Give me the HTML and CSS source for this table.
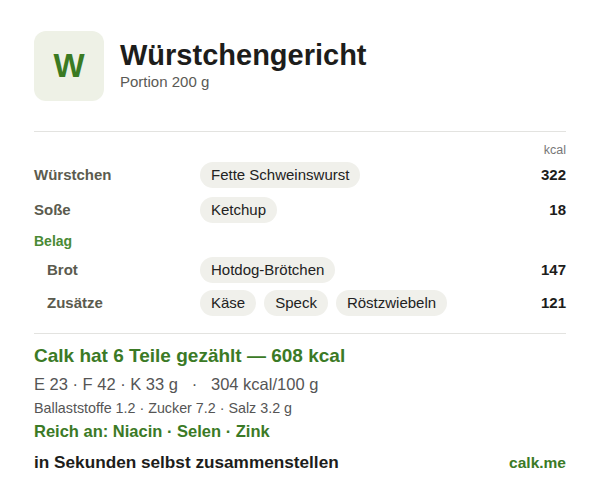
FILE: index.html
```html
<!DOCTYPE html>
<html lang="de">
<head>
<meta charset="utf-8">
<link rel="stylesheet" href="styles.css">
</head>
<body>
<div class="card">
  <header class="head">
    <div class="logo">W</div>
    <div class="head-text">
      <h1 class="title">Würstchengericht</h1>
      <div class="portion">Portion 200 g</div>
    </div>
  </header>
  <hr class="rule">
  <div class="unit">kcal</div>
  <div class="rows">
    <div class="row">
      <div class="label">Würstchen</div>
      <div class="chips"><span class="chip">Fette Schweinswurst</span></div>
      <div class="num">322</div>
    </div>
    <div class="row">
      <div class="label">Soße</div>
      <div class="chips"><span class="chip">Ketchup</span></div>
      <div class="num">18</div>
    </div>
    <div class="group">Belag</div>
    <div class="row sub">
      <div class="label">Brot</div>
      <div class="chips"><span class="chip">Hotdog-Brötchen</span></div>
      <div class="num">147</div>
    </div>
    <div class="row sub">
      <div class="label">Zusätze</div>
      <div class="chips"><span class="chip">Käse</span><span class="chip">Speck</span><span class="chip">Röstzwiebeln</span></div>
      <div class="num">121</div>
    </div>
  </div>
  <hr class="rule rule2">
  <div class="summary">Calk hat 6 Teile gezählt — 608 kcal</div>
  <div class="macros">E 23 · F 42 · K 33 g &nbsp; · &nbsp; 304 kcal/100 g</div>
  <div class="micro">Ballaststoffe 1.2 · Zucker 7.2 · Salz 3.2 g</div>
  <div class="rich">Reich an: Niacin · Selen · Zink</div>
  <footer class="foot">
    <span class="cta">in Sekunden selbst zusammenstellen</span>
    <span class="brand">calk.me</span>
  </footer>
</div>
</body>
</html>
```
FILE: styles.css
```css
* { box-sizing: border-box; }
html, body { margin: 0; padding: 0; background: #ffffff; }
body { font-family: "Liberation Sans", Arial, sans-serif; color: #1d1d1b; }
.card { width: 600px; padding: 31px 34px 0 34px; }
.head { display: flex; align-items: center; gap: 16px; }
.logo {
  width: 70px; height: 70px; border-radius: 12px;
  background: #eef1e6; color: #3a7a22;
  display: flex; align-items: center; justify-content: center;
  font-weight: 700; font-size: 33px;
}
.head-text { display: flex; flex-direction: column; padding-bottom: 2px; }
.title { margin: 0; font-size: 29px; line-height: 33px; font-weight: 700; color: #1d1d1b; }
.portion { font-size: 15px; line-height: 18px; color: #5a5a55; margin-top: 1px; }
.rule { border: 0; border-top: 1px solid #e3e3e0; margin: 30px 0 0 0; }
.unit { text-align: right; font-size: 12.5px; color: #777; line-height: 14px; margin-top: 11px; }
.rows { display: flex; flex-direction: column; }
.row { display: grid; grid-template-columns: 166px 1fr auto; align-items: center; height: 35px; }
.row.sub { height: 33px; }
.row.sub .label { padding-left: 13px; }
.label { font-size: 15px; font-weight: 700; color: #5b5b4e; }
.chips { display: flex; gap: 8px; }
.chip {
  background: #f0f0eb; border-radius: 13px; padding: 0 11px;
  height: 26px; line-height: 26px; font-size: 15px; color: #222;
}
.num { font-size: 15px; font-weight: 700; color: #1d1d1b; text-align: right; }
.group { font-size: 14px; font-weight: 700; color: #4a8a35; line-height: 16px; margin-top: 6px; margin-bottom: 4px; }
.rule2 { margin-top: 14px; }
.summary { font-size: 19px; font-weight: 700; color: #3b7a26; margin-top: 11px; line-height: 22px; }
.macros { font-size: 16.5px; color: #555; margin-top: 8px; line-height: 19px; }
.micro { font-size: 14.3px; color: #555; margin-top: 6px; line-height: 16px; }
.rich { font-size: 16.5px; font-weight: 700; color: #3b7a26; margin-top: 6px; line-height: 19px; }
.foot { display: flex; justify-content: space-between; align-items: baseline; margin-top: 11px; }
.cta { font-size: 17.2px; font-weight: 700; color: #1d1d1b; }
.brand { font-size: 15.5px; font-weight: 700; color: #3b7a26; }
```
